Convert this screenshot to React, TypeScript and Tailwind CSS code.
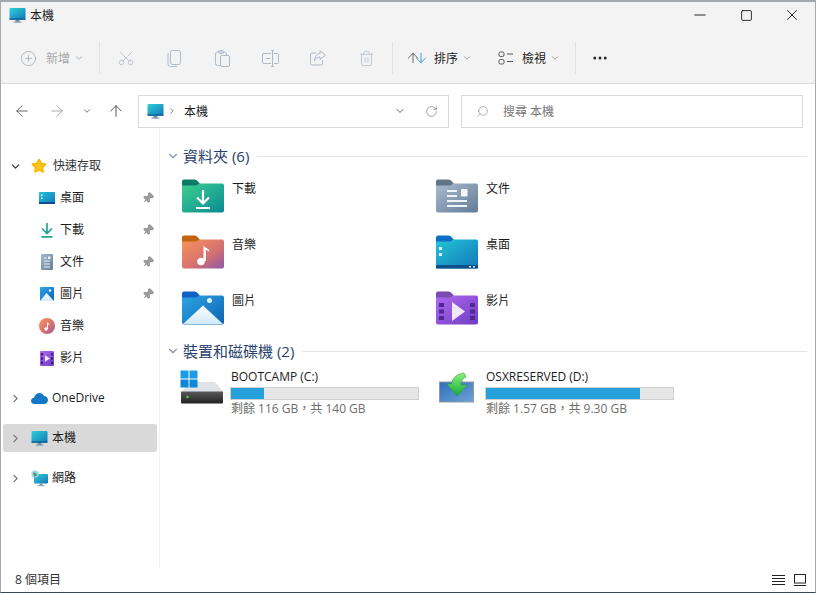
import React from 'react';
import {
  ArrowDown,
  ArrowLeft,
  ArrowRight,
  ArrowUp,
  ChevronDown,
  ChevronRight,
  CirclePlus,
  Ellipsis,
  Minus,
  Pin,
  RotateCw,
  Scissors,
  Search,
  Square,
  Star,
  Trash2,
  X,
} from 'lucide-react';

const FOLDERS = ['下載', '文件', '音樂', '桌面', '圖片', '影片'];

const Defs = () => (
  <svg width="0" height="0" className="absolute">
    <defs>
      <linearGradient id="mon" x1="0" y1="0" x2="1" y2="1">
        <stop offset="0" stopColor="#2fd0d8" />
        <stop offset="1" stopColor="#1277b8" />
      </linearGradient>
      <linearGradient id="green" x1="0" y1="0" x2="1" y2="1">
        <stop offset="0" stopColor="#3ed08f" />
        <stop offset="1" stopColor="#0a8a94" />
      </linearGradient>
      <linearGradient id="slate" x1="0" y1="0" x2="1" y2="1">
        <stop offset="0" stopColor="#a9bbd0" />
        <stop offset="1" stopColor="#627c96" />
      </linearGradient>
      <linearGradient id="music" x1="0" y1="0" x2="1" y2="1">
        <stop offset="0" stopColor="#f9945a" />
        <stop offset="0.6" stopColor="#d4706f" />
        <stop offset="1" stopColor="#8d58a8" />
      </linearGradient>
      <linearGradient id="desk" x1="0" y1="0" x2="1" y2="1">
        <stop offset="0" stopColor="#22c4d8" />
        <stop offset="1" stopColor="#1378b8" />
      </linearGradient>
      <linearGradient id="pic" x1="0" y1="0" x2="1" y2="1">
        <stop offset="0" stopColor="#2ea6e6" />
        <stop offset="1" stopColor="#0f62b0" />
      </linearGradient>
      <linearGradient id="vid" x1="0" y1="0" x2="1" y2="1">
        <stop offset="0" stopColor="#b06af0" />
        <stop offset="1" stopColor="#6f3cc4" />
      </linearGradient>
      <linearGradient id="snow" x1="0" y1="0" x2="0" y2="1">
        <stop offset="0" stopColor="#ffffff" />
        <stop offset="1" stopColor="#cfeafa" />
      </linearGradient>
      <linearGradient id="hdd" x1="0" y1="0" x2="0" y2="1">
        <stop offset="0" stopColor="#5a5a5a" />
        <stop offset="1" stopColor="#222222" />
      </linearGradient>
      <linearGradient id="arrow" x1="0" y1="0" x2="0" y2="1">
        <stop offset="0" stopColor="#8df07a" />
        <stop offset="1" stopColor="#12a83c" />
      </linearGradient>
      <linearGradient id="screen" x1="0" y1="0" x2="1" y2="1">
        <stop offset="0" stopColor="#2f6fb8" />
        <stop offset="1" stopColor="#6ea2d6" />
      </linearGradient>
    </defs>
  </svg>
);

const Monitor = ({ size = 17 }: { size?: number }) => (
  <svg width={size} height={size} viewBox="0 0 17 17" className="shrink-0">
    <rect x="6.5" y="12" width="4" height="3" fill="#6f8fa6" />
    <rect x="4.5" y="14.6" width="8" height="1.2" rx="0.5" fill="#8aa0b2" />
    <rect x="0.5" y="1" width="16" height="11.6" rx="1" fill="url(#mon)" />
    <rect x="0.5" y="11.4" width="16" height="1.4" fill="#0d5c94" />
  </svg>
);

const FolderShell = ({ tab, fill, children }: { tab: string; fill: string; children?: React.ReactNode }) => (
  <svg width="42" height="34" viewBox="0 0 42 34" className="shrink-0">
    <path d="M0 2.5A2 2 0 0 1 2 0.5h10.5c1.5 0 2.5 .8 3.5 2l2.5 3H40a2 2 0 0 1 2 2V20H0Z" fill={tab} />
    <path d="M0 6.5h12.5c2 0 3-.7 4-1.6l.6-.4H40a2 2 0 0 1 2 2V31.5a2 2 0 0 1-2 2H2a2 2 0 0 1-2-2Z" fill={fill} />
    {children}
  </svg>
);

const FolderIcon = ({ name }: { name: string }) => {
  if (name === '下載') {
    return (
      <FolderShell tab="#0b7a66" fill="url(#green)">
        <path d="M21 11v13M15 18.5l6 6 6-6M14 29h14" stroke="#fff" strokeWidth="2.2" fill="none" />
      </FolderShell>
    );
  }
  if (name === '文件') {
    return (
      <FolderShell tab="#5f7687" fill="url(#slate)">
        <path d="M11 12h10M11 17h10M11 22h20M11 27h20" stroke="#eef3f8" strokeWidth="2" />
        <rect x="25" y="10" width="6.5" height="7.5" rx="1" fill="#f4f7fa" />
      </FolderShell>
    );
  }
  if (name === '音樂') {
    return (
      <FolderShell tab="#c2630f" fill="url(#music)">
        <circle cx="19" cy="26.5" r="3.8" fill="#fff" />
        <path d="M21.5 26V10.5c2 3.5 6 2.5 6 6.5-1.5-1.5-3-2-3.6-2V26Z" fill="#fff" />
      </FolderShell>
    );
  }
  if (name === '桌面') {
    return (
      <FolderShell tab="#0f6fc4" fill="url(#desk)">
        <rect x="0" y="30" width="42" height="3.5" fill="#0e4f8c" />
        <rect x="3" y="12" width="3" height="3" fill="#e6fbff" />
        <rect x="3" y="18" width="3" height="3" fill="#e6fbff" />
        <rect x="33" y="31" width="2" height="1.5" fill="#cfe8f6" />
        <rect x="37" y="31" width="2" height="1.5" fill="#cfe8f6" />
      </FolderShell>
    );
  }
  if (name === '圖片') {
    return (
      <FolderShell tab="#0f62c4" fill="url(#pic)">
        <circle cx="27.5" cy="9.5" r="2.5" fill="#e6f6ff" />
        <path d="M1 33L21 14.5 41 33Z" fill="url(#snow)" />
      </FolderShell>
    );
  }
  return (
    <FolderShell tab="#7a4bb0" fill="url(#vid)">
      <path d="M3 12h5v4H3ZM3 18.5h5v4H3ZM3 25h5v4H3ZM34 12h5v4h-5ZM34 18.5h5v4h-5ZM34 25h5v4h-5Z" fill="#4f2a8c" />
      <path d="M16 11l13 9.5-13 9.5Z" fill="#efe6fa" />
    </FolderShell>
  );
};

const NavIcon = ({ name }: { name: string }) => {
  if (name === '桌面') {
    return (
      <svg width="16" height="12" viewBox="0 0 16 12">
        <rect width="16" height="12" rx="1" fill="url(#desk)" />
        <rect y="10" width="16" height="2" fill="#0e4f8c" />
        <rect x="2" y="2.5" width="1.5" height="1.5" fill="#e6fbff" />
        <rect x="2" y="5.5" width="1.5" height="1.5" fill="#e6fbff" />
      </svg>
    );
  }
  if (name === '下載') {
    return (
      <svg width="14" height="16" viewBox="0 0 14 16">
        <path d="M7 1v10M2 6.5L7 11.5 12 6.5M1.5 14.8h11" stroke="#1fa88e" strokeWidth="1.7" fill="none" />
      </svg>
    );
  }
  if (name === '文件') {
    return (
      <svg width="12" height="16" viewBox="0 0 12 16">
        <rect width="12" height="16" rx="1" fill="url(#slate)" />
        <path d="M3 4h3M3 7h6M3 10h6M3 13h6" stroke="#eef3f8" strokeWidth="1" />
        <rect x="7" y="2.5" width="2.5" height="2.5" fill="#eef3f8" />
      </svg>
    );
  }
  if (name === '圖片') {
    return (
      <svg width="14" height="14" viewBox="0 0 14 14">
        <rect width="14" height="14" rx="1" fill="url(#pic)" />
        <circle cx="10" cy="3.5" r="1.2" fill="#fff" />
        <path d="M0 14L6.5 6 14 14Z" fill="url(#snow)" />
      </svg>
    );
  }
  if (name === '音樂') {
    return (
      <svg width="16" height="16" viewBox="0 0 16 16">
        <circle cx="8" cy="8" r="8" fill="url(#music)" />
        <circle cx="7" cy="11" r="1.7" fill="#fff" />
        <path d="M8 11V4c1 1.5 2.5 1.2 2.8 3-.8-.6-1.3-.8-1.8-.8V11Z" fill="#fff" />
      </svg>
    );
  }
  return (
    <svg width="14" height="15" viewBox="0 0 14 15">
      <rect width="14" height="15" rx="1" fill="url(#vid)" />
      <path d="M1 2h2v2.4H1ZM1 6.3h2v2.4H1ZM1 10.6h2V13H1ZM11 2h2v2.4h-2ZM11 6.3h2v2.4h-2ZM11 10.6h2V13h-2Z" fill="#3b1f78" />
      <path d="M5 4.2l5 3.3-5 3.3Z" fill="#f4e9ff" />
    </svg>
  );
};

const HddIcon = () => (
  <svg width="44" height="35" viewBox="0 0 44 35" className="shrink-0">
    <path d="M1 23L9 12h26l9 11Z" fill="#dfe3e8" />
    <rect x="0.5" y="0.5" width="8" height="8" fill="#1c9ce8" />
    <rect x="9.5" y="0.5" width="8" height="8" fill="#1c9ce8" />
    <rect x="0.5" y="9.5" width="8" height="8" fill="#0f86d8" />
    <rect x="9.5" y="9.5" width="8" height="8" fill="#0f86d8" />
    <path d="M1 21.5h42v11a1 1 0 0 1-1 1H2a1 1 0 0 1-1-1Z" fill="url(#hdd)" />
    <circle cx="7.500" cy="27" r="1.200" fill="#4be04b" />
  </svg>
);

const RestoreIcon = () => (
  <svg width="36" height="35" viewBox="0 0 36 35" className="shrink-0">
    <rect x="0.5" y="12" width="34" height="20" fill="url(#screen)" stroke="#8e9aa6" />
    <path d="M25 3C18 4 13 8 12.500 14L8 14l10 12 10-11-6 0c0-4 2-7 5-8Z" fill="url(#arrow)" stroke="#2d9a3c" strokeWidth="0.6" />
  </svg>
);

const ToolIcon = ({ children }: { children: React.ReactNode }) => (
  <div className="flex h-8 w-12 items-center justify-center text-[#aebac6]">{children}</div>
);

const Sep = () => <div className="h-8 w-px bg-[#e2e2e2]" />;

const NavItem = ({ name, pinned }: { name: string; pinned?: boolean }) => (
  <div className="flex h-8 items-center pl-[36px] pr-[5px]">
    <div className="flex w-[19px] justify-center">
      <NavIcon name={name} />
    </div>
    <span className="ml-[4px] flex-1 text-[#1c1c1c]">{name}</span>
    {pinned && <Pin size={12} className="rotate-45 text-[#9a9a9a]" fill="#9a9a9a" />}
  </div>
);

const TopNode = ({ label, icon, selected }: { label: string; icon: React.ReactNode; selected?: boolean }) => (
  <div className={`mx-[2px] flex h-7 w-[154px] items-center rounded-[2px] pl-[6px] ${selected ? 'bg-[#d9d9d9]' : ''}`}>
    <ChevronRight size={13} className="text-[#7a7a7a]" />
    <div className="ml-[8px] flex w-[18px] justify-center">{icon}</div>
    <span className="ml-[4px] text-[#1c1c1c]">{label}</span>
  </div>
);

const SectionHead = ({ label }: { label: string }) => (
  <div className="flex h-5 items-center">
    <ChevronDown size={14} className="text-[#8a94a6]" />
    <span className="ml-[3px] text-[15px] text-[#2a3f6b]">{label}</span>
    <div className="ml-[8px] h-px flex-1 bg-[#e5e5e5]" />
  </div>
);

const Drive = ({ icon, name, pct, info }: { icon: React.ReactNode; name: string; pct: number; info: string }) => (
  <div className="flex w-[255px] items-start">
    <div className="w-[50px] shrink-0">{icon}</div>
    <div className="w-[189px]">
      <div className="h-[17px] pl-px text-[12px] leading-[14px] text-[#1c1c1c]">{name}</div>
      <div className="h-[13px] w-[189px] border border-[#cfcfcf] bg-[#e6e6e6]">
        <div className="h-full bg-[#26a0da]" style={{ width: `${pct}%` }} />
      </div>
      <div className="mt-[1px] pl-px text-[12px] leading-[16px] text-[#6d6d6d]">{info}</div>
    </div>
  </div>
);

export default function App() {
  return (
    <div className="flex h-[593px] w-[816px] flex-col overflow-hidden border border-t-2 border-[#a5a9ad] border-b-[#33475f] bg-white font-['Open_Sans','Noto_Sans_CJK_TC',sans-serif] text-[12px]">
      <Defs />
      {/* title bar */}
      <div className="flex h-[35px] shrink-0 items-center bg-[#f3f3f3] pb-[9px] pl-[8px]">
        <Monitor />
        <span className="ml-[4px] pt-[2px] text-[#1c1c1c]">本機</span>
        <div className="ml-auto flex">
          <div className="flex h-[30px] w-[46px] items-center justify-center"><Minus size={18} strokeWidth={1.1} /></div>
          <div className="flex h-[30px] w-[46px] items-center justify-center"><Square size={13} strokeWidth={1.5} /></div>
          <div className="flex h-[30px] w-[46px] items-center justify-center"><X size={18} strokeWidth={1.1} /></div>
        </div>
      </div>

      {/* command bar */}
      <div className="flex h-[47px] shrink-0 items-center border-b border-[#dcdcdc] bg-[#f3f3f3] pb-[4px] pl-[19px]">
        <CirclePlus size={17} strokeWidth={1} className="text-[#9aa3ad]" />
        <span className="ml-[9px] pt-[2px] text-[#a6a6a6]">新增</span>
        <ChevronDown size={10} className="ml-[4px] text-[#a6a6a6]" />
        <div className="ml-[15px]"><Sep /></div>
        <div className="ml-[2px] flex">
          <ToolIcon><Scissors size={18} strokeWidth={1} className="-rotate-90" /></ToolIcon>
          <ToolIcon>
            <svg width="14" height="17" viewBox="0 0 14 17" fill="none" stroke="currentColor">
              <rect x="3.500" y="0.500" width="10" height="14" rx="2" />
              <path d="M1 3v11a2.500 2.500 0 0 0 2.500 2.500H10" />
            </svg>
          </ToolIcon>
          <ToolIcon>
            <svg width="15" height="17" viewBox="0 0 15 17" fill="none" stroke="currentColor">
              <path d="M5 15.500H2.500a2 2 0 0 1-2-2V4a2 2 0 0 1 2-2h7a2 2 0 0 1 2 2v1" />
              <rect x="3.500" y="0.500" width="5" height="3" rx="1" />
              <rect x="5.500" y="5.500" width="9" height="11" rx="1.500" />
            </svg>
          </ToolIcon>
          <ToolIcon>
            <svg width="17" height="17" viewBox="0 0 17 17" fill="none" stroke="currentColor">
              <path d="M9 3.500H2a1.500 1.500 0 0 0-1.500 1.500v7A1.500 1.500 0 0 0 2 13.500h7M12 3.500h3.500A1 1 0 0 1 16.500 4.500v8a1 1 0 0 1-1 1H12M10.500 1v15M9 .5h3M9 16.500h3M4 8.500h4" />
            </svg>
          </ToolIcon>
          <ToolIcon>
            <svg width="16" height="16" viewBox="0 0 16 16" fill="none" stroke="currentColor">
              <path d="M6 3H2a1.500 1.500 0 0 0-1.500 1.500v9A1.500 1.500 0 0 0 2 15h9a1.500 1.500 0 0 0 1.500-1.500V10" />
              <path d="M10 .8l5.500 4.500L10 9.500V7C7.500 7 5.500 8.500 4.500 11 4.500 7 6.500 3.800 10 3.500Z" />
            </svg>
          </ToolIcon>
          <ToolIcon><Trash2 size={17} strokeWidth={1} /></ToolIcon>
        </div>
        <div className="ml-[2px]"><Sep /></div>
        <ArrowUp size={16} strokeWidth={1.2} className="ml-[12px] text-[#4a4a4a]" />
        <ArrowDown size={16} strokeWidth={1.2} className="-ml-[8px] text-[#1f86cf]" />
        <span className="ml-[5px] pt-[2px] text-[#1c1c1c]">排序</span>
        <ChevronDown size={10} className="ml-[4px] text-[#8a8a8a]" />
        <svg width="16" height="14" viewBox="0 0 16 14" fill="none" stroke="#555" className="ml-[26px]">
          <rect x="1" y="1" width="5" height="4.5" rx="1.5" />
          <rect x="1" y="8.5" width="5" height="4.5" rx="1.5" />
          <path d="M9 3h6M9 10.5h6" />
        </svg>
        <span className="ml-[8px] pt-[2px] text-[#1c1c1c]">檢視</span>
        <ChevronDown size={10} className="ml-[4px] text-[#8a8a8a]" />
        <div className="ml-[15px]"><Sep /></div>
        <Ellipsis size={18} className="ml-[15px] text-[#2a2a2a]" />
      </div>

      {/* address row */}
      <div className="flex h-[44px] shrink-0 items-center pt-[10px]">
        <ArrowLeft size={18} strokeWidth={1.2} className="ml-[12px] text-[#555]" />
        <ArrowRight size={18} strokeWidth={1.2} className="ml-[17px] text-[#a0a0a0]" />
        <ChevronDown size={10} className="ml-[16px] text-[#555]" />
        <ArrowUp size={18} strokeWidth={1.2} className="ml-[15px] text-[#444]" />
        <div className="ml-[13px] flex h-[33px] w-[311px] items-center border border-[#dadada] pl-[8px]">
          <Monitor />
          <ChevronRight size={10} className="ml-[3px] text-[#666]" />
          <span className="ml-[7px] pt-[2px] text-[#1c1c1c]">本機</span>
          <ChevronDown size={12} className="ml-auto text-[#666]" />
          <RotateCw size={13} strokeWidth={1.1} className="ml-[19px] mr-[10px] text-[#666]" />
        </div>
        <div className="ml-[12px] flex h-[33px] w-[342px] items-center border border-[#dadada] pl-[14px] text-[#777]">
          <Search size={13} strokeWidth={1} className="-scale-x-100" />
          <span className="ml-[14px] pt-[2px]">搜尋 本機</span>
        </div>
      </div>

      <div className="flex min-h-0 flex-1">
        {/* nav pane */}
        <div className="w-[159px] shrink-0 border-r border-[#f2f2f2] pt-[22px]">
          <div className="flex h-8 items-center pl-[8px]">
            <ChevronDown size={13} strokeWidth={2.2} className="text-[#333]" />
            <Star size={16} className="ml-[9px] text-[#f7b500]" fill="#fcc419" />
            <span className="ml-[6px] text-[#333]">快速存取</span>
          </div>
          <NavItem name="桌面" pinned />
          <NavItem name="下載" pinned />
          <NavItem name="文件" pinned />
          <NavItem name="圖片" pinned />
          <NavItem name="音樂" />
          <NavItem name="影片" />
          <div className="mt-[10px] flex flex-col gap-3">
            <TopNode
              label="OneDrive"
              icon={
                <svg width="17" height="11" viewBox="0 0 17 11">
                  <path d="M3.5 11C1 11 0 9.300 0 8c0-1.700 1.200-3 3-3.200C3.800 2 6 0 8.500 0c2 0 3.700 1 4.500 3 2.200 0 4 1.700 4 4 0 2.300-1.700 4-4 4Z" fill="#1478c8" />
                </svg>
              }
            />
            <TopNode label="本機" icon={<Monitor />} selected />
            <TopNode
              label="網路"
              icon={
                <svg width="17" height="17" viewBox="0 0 17 17">
                  <rect x="3" y="4" width="14" height="9.500" rx="1" fill="url(#mon)" />
                  <rect x="8.500" y="13.500" width="3" height="2" fill="#7a93a8" />
                  <rect x="6.500" y="15.200" width="7" height="1" fill="#8aa0b2" />
                  <circle cx="4" cy="4" r="3.600" fill="#9fd0ee" />
                  <path d="M2 2.500l3 .5 1 2-2.500 2Z" fill="#3f9e62" />
                </svg>
              }
            />
          </div>
        </div>

        {/* content */}
        <div className="min-w-0 flex-1 pl-[6px] pr-[8px] pt-[18px]">
          <SectionHead label="資料夾 (6)" />
          <div className="mt-[13px] grid grid-cols-[254px_254px] gap-y-[22px] pl-[16px]">
            {FOLDERS.map((name) => (
              <div key={name} className="flex h-[34px] items-start">
                <FolderIcon name={name} />
                <span className="ml-[8px] mt-px text-[#1c1c1c]">{name}</span>
              </div>
            ))}
          </div>
          <div className="mt-[16px]">
            <SectionHead label="裝置和磁碟機 (2)" />
          </div>
          <div className="mt-[9px] flex pl-[14px]">
            <Drive icon={<HddIcon />} name="BOOTCAMP (C:)" pct={17.500} info="剩餘 116 GB，共 140 GB" />
            <Drive icon={<div className="ml-[4px]"><RestoreIcon /></div>} name="OSXRESERVED (D:)" pct={82.500} info="剩餘 1.57 GB，共 9.30 GB" />
          </div>
        </div>
      </div>

      {/* status bar */}
      <div className="flex h-[24px] shrink-0 items-center pl-[14px] pr-[9px] text-[#333]">
        <span>8 個項目</span>
        <div className="ml-auto flex items-center gap-[9px]">
          <svg width="13" height="11" viewBox="0 0 13 11" stroke="#222">
            <path d="M0 .5h13M0 3.500h13M0 6.500h13M0 9.500h13" />
          </svg>
          <svg width="12" height="12" viewBox="0 0 12 12" fill="none" stroke="#222">
            <rect x=".5" y=".5" width="11" height="8.500" />
            <path d="M0 11.500h12" />
          </svg>
        </div>
      </div>
    </div>
  );
}
